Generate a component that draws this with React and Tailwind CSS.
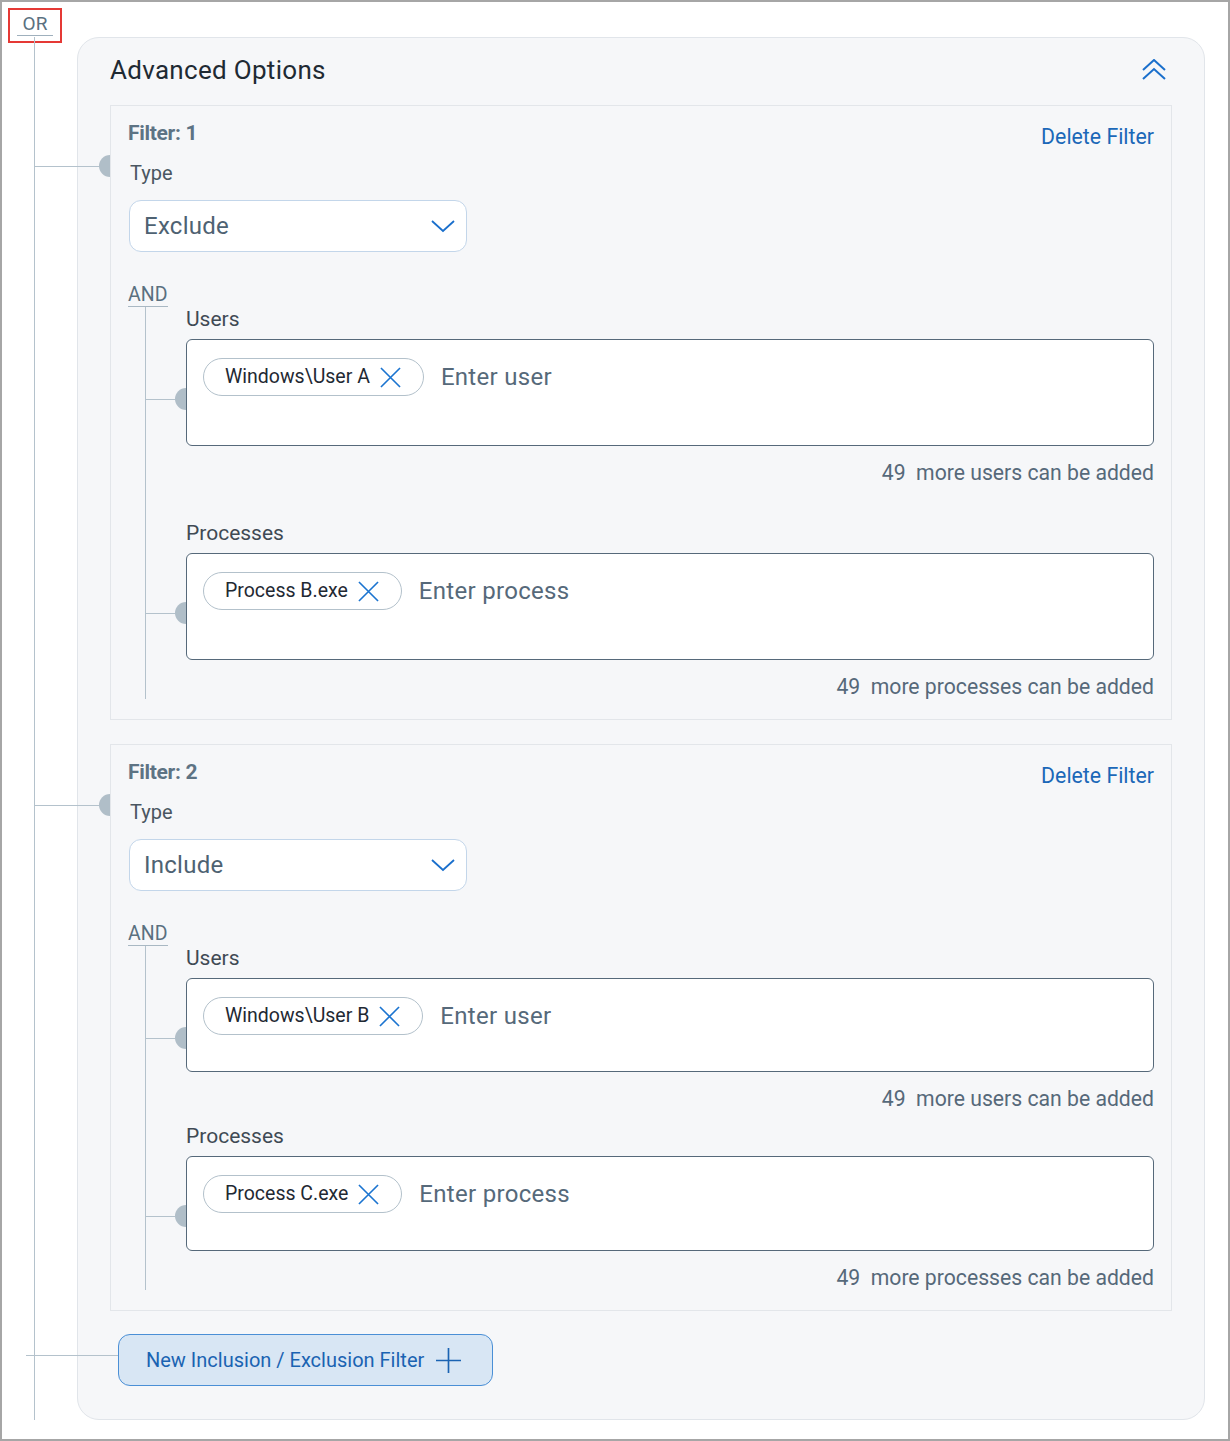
import React from 'react';

const ChevronsUpIcon = () => (
  <svg width="24" height="22" viewBox="0 0 24 22" fill="none" stroke="#1a6fcc" strokeWidth="2">
    <path d="M1 11 L12 1 L23 11" />
    <path d="M1 20 L12 10 L23 20" />
  </svg>
);

const ChevronDownIcon = () => (
  <svg width="24" height="14" viewBox="0 0 24 14" fill="none" stroke="#1a6fcc" strokeWidth="1.8">
    <path d="M1 2 L12 12 L23 2" />
  </svg>
);

const XIcon = () => (
  <svg width="21" height="21" viewBox="0 0 22 22" fill="none" stroke="#1b74d0" strokeWidth="1.7">
    <path d="M1 1 L21 21 M21 1 L1 21" />
  </svg>
);

const PlusIcon = () => (
  <svg width="25" height="25" viewBox="0 0 24 24" fill="none" stroke="#1a63b2" strokeWidth="1.6">
    <path d="M12 0 V24 M0 12 H24" />
  </svg>
);

// small tree connector that ends in a half disc on the box border
const Connector = ({ className }) => (
  <div className={`absolute flex items-center ${className}`}>
    <div className="h-px flex-1 bg-[#b4c2cc]" />
    <div className="h-[22px] w-[11px] rounded-l-[11px] bg-[#b0bec8]" />
  </div>
);

const TagField = ({ label, chip, placeholder, hint, height, className = '' }) => (
  <div className={className}>
    <div className="text-[21px] leading-[24px] text-[#3f4a54]">{label}</div>
    <div className={`relative mt-[8px] flex items-start rounded-[6px] border border-[#56697a] bg-white pl-[16px] pt-[18px] ${height}`}>
      <Connector className="left-[-42px] top-[48px] w-[41px]" />
      <div className="flex h-[38px] items-center gap-[10px] rounded-full border border-[#b3c1cb] pl-[21px] pr-[22px] text-[19.5px] text-[#1f2933]">
        <span>{chip}</span>
        <XIcon />
      </div>
      <span className="ml-[17px] text-[24px] leading-[38px] tracking-[0.3px] text-[#56697a]">{placeholder}</span>
    </div>
    <div className="mt-[15px] whitespace-pre text-right text-[21.2px] leading-[24px] text-[#56697a]">{hint}</div>
  </div>
);

const FilterBox = ({ index, type, user, process, userHeight, processHeight, gap, className = '' }) => (
  <div className={`relative border border-[#e3e6ea] px-[17px] pb-[20px] pt-[15px] ${className}`}>
    <Connector className="left-[-77px] top-[49px] w-[76px]" />
    <div className="flex items-start justify-between">
      <span className="text-[21px] font-bold leading-[24px] tracking-[-0.3px] text-[#5d7384]">Filter: {index}</span>
      <span className="mt-[4px] text-[21.3px] leading-[24px] text-[#1b68b8]">Delete Filter</span>
    </div>
    <div className="mt-[12px] pl-[2px] text-[20px] leading-[24px] text-[#4a5661]">Type</div>
    <div className="ml-px mt-[15px] flex h-[52px] w-[338px] items-center justify-between rounded-[12px] border border-[#c3d6ea] bg-white pl-[14px] pr-[11px]">
      <span className="text-[24px] tracking-[0.25px] text-[#4e6272]">{type}</span>
      <ChevronDownIcon />
    </div>
    <div className="mt-[32px] w-[40px] border-b border-[#a9b8c3] text-[19.5px] leading-[22px] text-[#5a7080]">AND</div>
    <div className="relative pl-[58px]">
      <div className="absolute bottom-0 left-[17px] top-0 w-px bg-[#b4c2cc]" />
      <TagField
        label="Users"
        chip={user}
        placeholder="Enter user"
        hint="49  more users can be added"
        height={userHeight}
      />
      <TagField
        label="Processes"
        chip={process}
        placeholder="Enter process"
        hint="49  more processes can be added"
        height={processHeight}
        className={gap}
      />
    </div>
  </div>
);

export default function App() {
  return (
    <div className="relative h-[1441px] w-[1230px] overflow-hidden border-2 border-[#a6a6a6] bg-white font-['Roboto',sans-serif]">
      {/* OR tag and its rail */}
      <div className="absolute left-[6px] top-[6px] flex h-[35px] w-[54px] justify-center border-2 border-[#e53935] pt-[3px]">
        <span className="h-[23px] border-b border-[#9fb0bd] px-[6px] text-[19px] leading-[22px] text-[#5a7080]">OR</span>
      </div>
      <div className="absolute left-[32px] top-[35px] h-[1383px] w-px bg-[#b4c2cc]" />

      <div className="ml-[75px] mt-[35px] w-[1128px] rounded-[22px] border border-[#e1e5ea] bg-[#f6f7f9] px-[32px] pb-[33px] pt-[16px]">
        <div className="mb-[19px] flex h-[32px] items-center justify-between">
          <h2 className="text-[26px] tracking-[0.3px] text-[#1f2a33]">Advanced Options</h2>
          <div className="mr-[6px]">
            <ChevronsUpIcon />
          </div>
        </div>

        <FilterBox
          index={1}
          type="Exclude"
          user="Windows\User A"
          process="Process B.exe"
          userHeight="h-[107px]"
          processHeight="h-[107px]"
          gap="mt-[36px]"
        />
        <FilterBox
          index={2}
          type="Include"
          user="Windows\User B"
          process="Process C.exe"
          userHeight="h-[94px]"
          processHeight="h-[95px]"
          gap="mt-[13px]"
          className="mt-[24px]"
        />

        <div className="relative ml-[8px] mt-[23px] flex h-[52px] w-fit items-center gap-[12px] rounded-[12px] border border-[#4a8fd6] bg-[#d8e6f4] pl-[27px] pr-[31px]">
          <div className="absolute left-[-93px] top-[20px] h-px w-[92px] bg-[#b4c2cc]" />
          <span className="text-[20px] text-[#1a63b2]">New Inclusion / Exclusion Filter</span>
          <PlusIcon />
        </div>
      </div>
    </div>
  );
}
